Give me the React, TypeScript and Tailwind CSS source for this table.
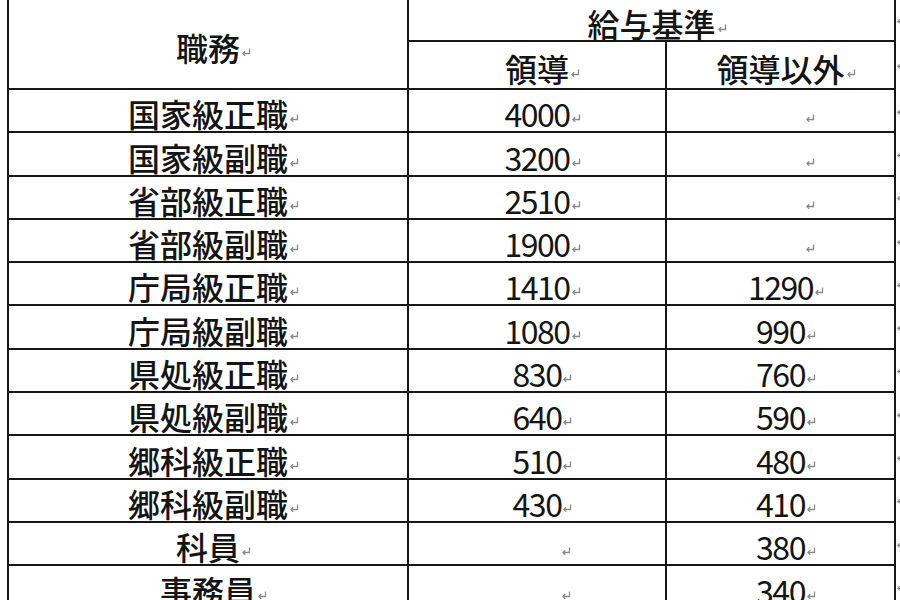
import React from "react";

const rows: [string, string, string][] = [
  ["国家級正職", "4000", ""],
  ["国家級副職", "3200", ""],
  ["省部級正職", "2510", ""],
  ["省部級副職", "1900", ""],
  ["庁局級正職", "1410", "1290"],
  ["庁局級副職", "1080", "990"],
  ["県処級正職", "830", "760"],
  ["県処級副職", "640", "590"],
  ["郷科級正職", "510", "480"],
  ["郷科級副職", "430", "410"],
  ["科員", "", "380"],
  ["事務員", "", "340"],
];

function Mark({ className }: { className?: string }) {
  return (
    <svg
      width="10"
      height="10"
      viewBox="0 0 10 10"
      className={className}
      fill="none"
      stroke="#8a8a8a"
      strokeWidth="1.3"
    >
      <path d="M8.5 1.5 V6.5 H2" />
      <path d="M4.2 4.3 L2 6.5 L4.2 8.7" />
    </svg>
  );
}

function Cell({ text, digits }: { text: string; digits?: boolean }) {
  if (!text) {
    return (
      <span className="relative inline-block h-[32px] w-[48px] align-middle">
        <Mark className="absolute left-full bottom-[6px]" />
      </span>
    );
  }
  return (
    <span
      className={
        "relative inline-block h-[32px] align-middle leading-[32px] " +
        (digits ? "font-normal tracking-[-1.5px]" : "")
      }
    >
      {text}
      <Mark className="absolute left-full bottom-[6px] ml-[1px]" />
    </span>
  );
}

function EndMark() {
  return (
    <span className="absolute left-[calc(100%+2px)] top-1/2 -translate-y-1/2 h-[9px] w-[9px]">
      <Mark className="h-[9px] w-[9px]" />
    </span>
  );
}

export default function App() {
  const border = "border-2 border-[#161616]";
  return (
    <div
      className="h-[600px] w-[900px] overflow-hidden bg-white text-[32px] leading-[32px] font-medium text-[#141414]"
      style={{ fontFamily: '"Noto Sans CJK JP", "Noto Sans", sans-serif' }}
    >
      <table className="ml-[7px] mt-[-2px] table-fixed border-collapse leading-[32px]">
        <colgroup>
          <col className="w-[400px]" />
          <col className="w-[258px]" />
          <col className="w-[229px]" />
        </colgroup>
        <tbody>
          <tr className="h-[42px]">
            <td rowSpan={2} className={border + " p-0 text-center"}>
              <Cell text="職務" />
            </td>
            <td colSpan={2} className={border + " relative p-0 text-center"}>
              <Cell text="給与基準" />
              <EndMark />
            </td>
          </tr>
          <tr className="h-[48px]">
            <td className={border + " p-0 text-center"}>
              <Cell text="領導" />
            </td>
            <td className={border + " relative p-0 text-center"}>
              <Cell text="領導以外" />
              <EndMark />
            </td>
          </tr>
          {rows.map(([a, b, c]) => (
            <tr key={a} className="h-[43.3px]">
              <td className={border + " p-0 text-center"}>
                <Cell text={a} />
              </td>
              <td className={border + " p-0 text-center"}>
                <Cell text={b} digits />
              </td>
              <td className={border + " relative p-0 text-center"}>
                <Cell text={c} digits />
                <EndMark />
              </td>
            </tr>
          ))}
        </tbody>
      </table>
    </div>
  );
}
